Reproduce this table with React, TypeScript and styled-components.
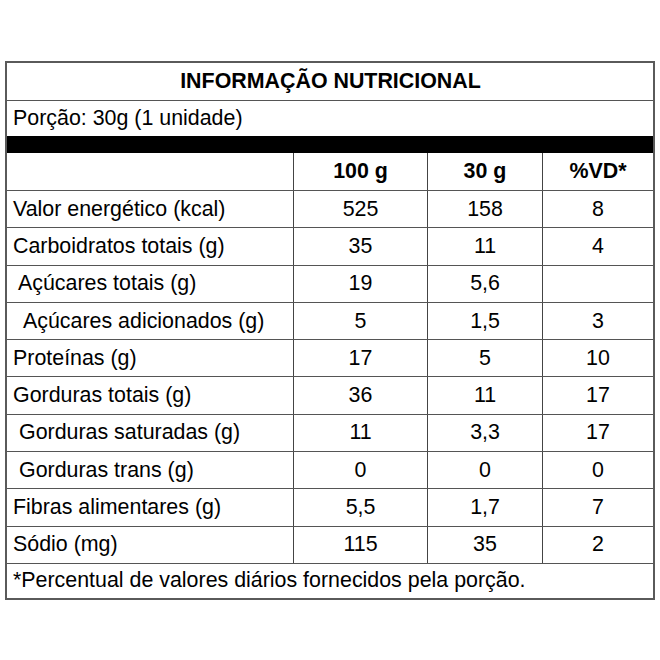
import React from "react";
import styled, { createGlobalStyle } from "styled-components";

type Row = {
  label: string;
  indent?: number;
  per100: string;
  perPortion: string;
  vd: string;
};

const rows: Row[] = [
  { label: "Valor energético (kcal)", per100: "525", perPortion: "158", vd: "8" },
  { label: "Carboidratos totais (g)", per100: "35", perPortion: "11", vd: "4" },
  { label: "Açúcares totais (g)", indent: 5, per100: "19", perPortion: "5,6", vd: "" },
  { label: "Açúcares adicionados (g)", indent: 10, per100: "5", perPortion: "1,5", vd: "3" },
  { label: "Proteínas (g)", per100: "17", perPortion: "5", vd: "10" },
  { label: "Gorduras totais (g)", per100: "36", perPortion: "11", vd: "17" },
  { label: "Gorduras saturadas (g)", indent: 6, per100: "11", perPortion: "3,3", vd: "17" },
  { label: "Gorduras trans (g)", indent: 6, per100: "0", perPortion: "0", vd: "0" },
  { label: "Fibras alimentares (g)", per100: "5,5", perPortion: "1,7", vd: "7" },
  { label: "Sódio (mg)", per100: "115", perPortion: "35", vd: "2" },
];

const GlobalStyle = createGlobalStyle`
  body {
    margin: 0;
    background: #fff;
    font-family: "Liberation Sans", Arial, sans-serif;
    color: #000;
  }
`;

const Page = styled.div`
  padding: 61px 5px 0 5px;
  width: 660px;
  box-sizing: border-box;
`;

const Table = styled.div`
  width: 650px;
  border: 2px solid #5a5a5a;
  box-sizing: border-box;
  font-size: 21.4px;
`;

const TitleRow = styled.div`
  height: 37px;
  display: flex;
  align-items: center;
  justify-content: center;
  font-weight: bold;
  border-bottom: 1px solid #555;
  padding-left: 1px;
`;

const PortionRow = styled.div`
  height: 35px;
  display: flex;
  align-items: center;
  padding-left: 6px;
`;

const Bar = styled.div`
  height: 17px;
  background: #000;
`;

const GridRow = styled.div<{ $height?: number }>`
  display: grid;
  grid-template-columns: 287px 134px 115px 1fr;
  height: ${({ $height }) => $height ?? 37.3}px;
  border-bottom: 1px solid #555;
  box-sizing: border-box;
`;

const Cell = styled.div<{ $bold?: boolean; $indent?: number; $left?: boolean }>`
  display: flex;
  align-items: center;
  justify-content: ${({ $left }) => ($left ? "flex-start" : "center")};
  padding-left: ${({ $left, $indent }) => ($left ? 6 + ($indent ?? 0) : 0)}px;
  font-weight: ${({ $bold }) => ($bold ? "bold" : "normal")};
  border-right: 1px solid #444;

  &:last-child {
    border-right: none;
  }
`;

const Footnote = styled.div`
  height: 34px;
  display: flex;
  align-items: center;
  padding-left: 6px;
`;

export default function App() {
  return (
    <Page>
      <GlobalStyle />
      <Table>
        <TitleRow>INFORMAÇÃO NUTRICIONAL</TitleRow>
        <PortionRow>Porção: 30g (1 unidade)</PortionRow>
        <Bar />
        <GridRow $height={38}>
          <Cell $left />
          <Cell $bold>100 g</Cell>
          <Cell $bold>30 g</Cell>
          <Cell $bold>%VD*</Cell>
        </GridRow>
        {rows.map((r) => (
          <GridRow key={r.label}>
            <Cell $left $indent={r.indent}>{r.label}</Cell>
            <Cell>{r.per100}</Cell>
            <Cell>{r.perPortion}</Cell>
            <Cell>{r.vd}</Cell>
          </GridRow>
        ))}
        <Footnote>*Percentual de valores diários fornecidos pela porção.</Footnote>
      </Table>
    </Page>
  );
}
